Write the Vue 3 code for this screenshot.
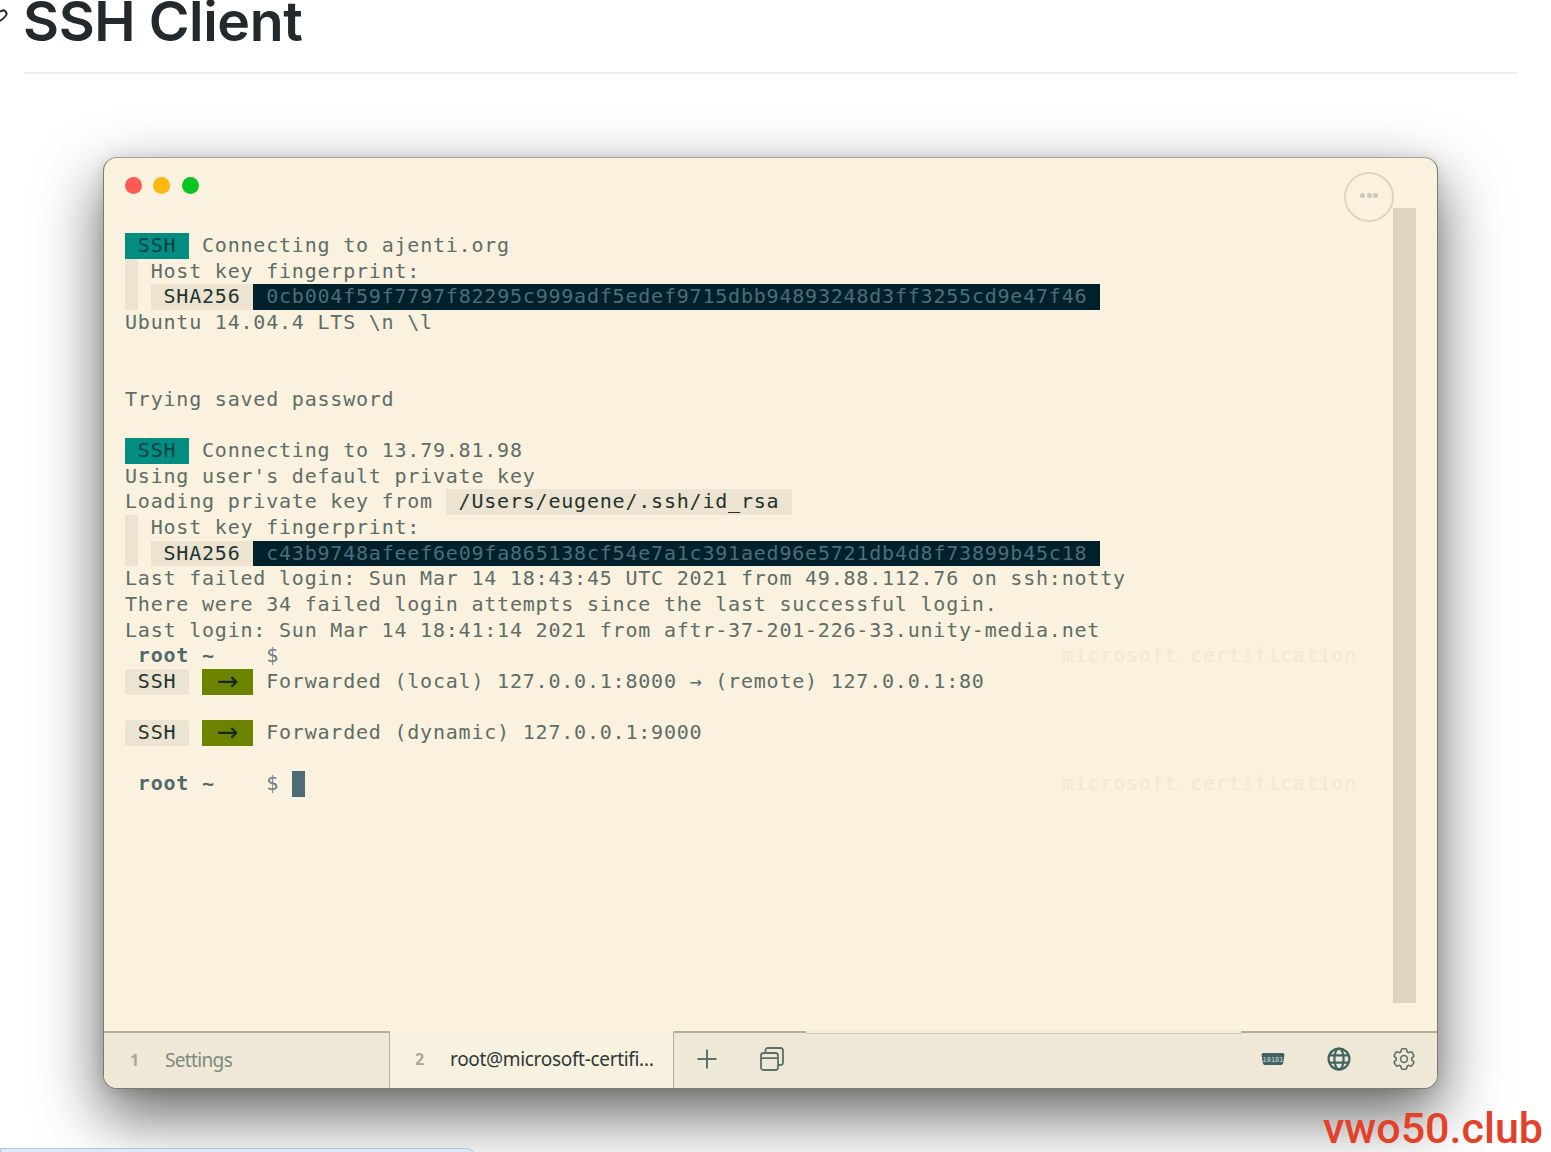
<script setup>
const wm = 'microsoft-certification'
const fp1 = '0cb004f59f7797f82295c999adf5edef9715dbb94893248d3ff3255cd9e47f46'
const fp2 = 'c43b9748afeef6e09fa865138cf54e7a1c391aed96e5721db4d8f73899b45c18'
const s = (t, c = '') => ({ t, c })
const hostKey = [s(' ', 'tint'), s(' '), s('Host key fingerprint:')]
const sha = (fp) => [s(' ', 'tint'), s(' '), s(' SHA256 ', 'tint strong'), s(` ${fp} `, 'hash')]
const prompt = [s(' '), s('root', 'root'), s(' '), s('~', 'root'), s('    '), s('$', 'dollar')]
const sshBadge = [s(' SSH ', 'teal'), s(' ')]
const fwd = (text) => [s(' SSH ', 'tint strong round'), s(' '), s('→', 'olive'), s(' '), s(text)]

const rows = [
  { segs: [...sshBadge, s('Connecting to ajenti.org')] },
  { segs: hostKey },
  { segs: sha(fp1) },
  { segs: [s('Ubuntu 14.04.4 LTS \\n \\l')] },
  { segs: [] },
  { segs: [] },
  { segs: [s('Trying saved password')] },
  { segs: [] },
  { segs: [...sshBadge, s('Connecting to 13.79.81.98')] },
  { segs: [s("Using user's default private key")] },
  { segs: [s('Loading private key from '), s(' /Users/eugene/.ssh/id_rsa ', 'tint strong')] },
  { segs: hostKey },
  { segs: sha(fp2) },
  { segs: [s('Last failed login: Sun Mar 14 18:43:45 UTC 2021 from 49.88.112.76 on ssh:notty')] },
  { segs: [s('There were 34 failed login attempts since the last successful login.')] },
  { segs: [s('Last login: Sun Mar 14 18:41:14 2021 from aftr-37-201-226-33.unity-media.net')] },
  { segs: prompt, mark: wm },
  { segs: fwd('Forwarded (local) 127.0.0.1:8000 → (remote) 127.0.0.1:80') },
  { segs: [] },
  { segs: fwd('Forwarded (dynamic) 127.0.0.1:9000') },
  { segs: [] },
  { segs: [...prompt, s(' '), s(' ', 'cursor')], mark: wm },
]
</script>

<template>
  <div class="page">
    <svg class="anchor" width="10" height="18" viewBox="0 0 10 18" aria-hidden="true">
      <path d="M0 2.5 L3.5 1.2 Q7 3 6.5 5.5 Q5.5 8 0 12" fill="none" stroke="#24292e" stroke-width="2" />
    </svg>
    <h1 class="title">SSH Client</h1>

    <section class="window">
      <header class="titlebar">
        <i class="light red"></i>
        <i class="light amber"></i>
        <i class="light green"></i>
      </header>

      <button class="more" type="button" aria-label="More"><i></i><i></i><i></i></button>

      <div class="body">
        <div class="terminal">
          <div v-for="(row, i) in rows" :key="i" class="row">
            <div class="cells">
              <span v-for="(seg, j) in row.segs" :key="j" :class="seg.c">{{ seg.t }}</span>
            </div>
            <span v-if="row.mark" class="mark">{{ row.mark }}</span>
          </div>
        </div>
        <div class="scrollbar"></div>
      </div>

      <footer class="tabbar">
        <div class="tab">
          <b class="num">1</b><span class="tab-name">Settings</span>
        </div>
        <div class="tab active">
          <b class="num">2</b><span class="tab-name">root@microsoft-certifi…</span>
        </div>
        <div class="tools">
          <svg class="ico plus" width="22" height="22" viewBox="0 0 22 22" aria-hidden="true">
            <path d="M11 1.5v19M1.5 11h19" />
          </svg>
          <svg class="ico cards" width="24" height="24" viewBox="0 0 24 24" aria-hidden="true">
            <rect x="1" y="6" width="17" height="17" rx="2.5" />
            <path d="M1 11.2h17M5.5 6V3.5A2.5 2.5 0 0 1 8 1h12.5A2.5 2.5 0 0 1 23 3.5v12a2.5 2.5 0 0 1-2.5 2.5H18" />
          </svg>
        </div>
        <div class="spacer"></div>
        <div class="status">
          <svg class="serial" width="24" height="14" viewBox="0 0 24 14" aria-hidden="true">
            <path d="M2.5 1h19A1.8 1.8 0 0 1 23.4 3l-1.2 8a2.4 2.4 0 0 1-2.4 2H4.2a2.4 2.4 0 0 1-2.4-2L.6 3A1.8 1.8 0 0 1 2.5 1Z" fill="#3e6266" />
            <text x="12" y="9.6" text-anchor="middle" class="serial-text">10101</text>
          </svg>
          <svg class="globe" width="24" height="24" viewBox="0 0 24 24" aria-hidden="true">
            <circle cx="12" cy="12" r="10.4" />
            <ellipse cx="12" cy="12" rx="4.6" ry="10.4" />
            <path d="M2 8.4h20M2 15.6h20" />
          </svg>
          <svg class="gear" width="24" height="24" viewBox="1.5 1.5 21 21" aria-hidden="true">
            <path d="M9.594 3.94c.09-.542.56-.94 1.11-.94h2.593c.55 0 1.02.398 1.11.94l.213 1.281c.063.374.313.686.645.87.074.04.147.083.22.127.325.196.72.257 1.075.124l1.217-.456a1.125 1.125 0 0 1 1.37.49l1.296 2.247a1.125 1.125 0 0 1-.26 1.431l-1.003.827c-.293.241-.438.613-.43.992a7.723 7.723 0 0 1 0 .255c-.008.378.137.75.43.991l1.004.827c.424.35.534.955.26 1.43l-1.298 2.247a1.125 1.125 0 0 1-1.369.491l-1.217-.456c-.355-.133-.75-.072-1.076.124a6.47 6.47 0 0 1-.22.128c-.331.183-.581.495-.644.869l-.213 1.281c-.09.543-.56.94-1.11.94h-2.594c-.55 0-1.019-.398-1.11-.94l-.213-1.281c-.062-.374-.312-.686-.644-.87a6.52 6.52 0 0 1-.22-.127c-.325-.196-.72-.257-1.076-.124l-1.217.456a1.125 1.125 0 0 1-1.369-.49l-1.297-2.247a1.125 1.125 0 0 1 .26-1.431l1.004-.827c.292-.24.437-.613.43-.991a6.932 6.932 0 0 1 0-.255c.007-.38-.138-.751-.43-.992l-1.004-.827a1.125 1.125 0 0 1-.26-1.43l1.297-2.247a1.125 1.125 0 0 1 1.37-.491l1.216.456c.356.133.751.072 1.076-.124.072-.044.146-.086.22-.128.332-.183.582-.495.644-.869l.214-1.28Z" />
            <circle cx="12" cy="12" r="3" />
          </svg>
        </div>
      </footer>
    </section>

    <div class="next-block"></div>
    <div class="brand">vwo50.club</div>
  </div>
</template>

<style scoped>
.page {
  position: relative;
  height: 1152px;
  overflow: hidden;
  padding: 0 34px 0 24px;
  box-sizing: border-box;
  background: #fff;
}
.anchor {
  position: absolute;
  left: 0;
  top: 9px;
}
.title {
  margin: -14px 0 0;
  height: 70px;
  padding-bottom: 16px;
  box-sizing: content-box;
  border-bottom: 2px solid #e9ebec;
  font: 600 55.4px/70px Inter, "Liberation Sans", sans-serif;
  letter-spacing: -0.4px;
  text-indent: -1px;
  color: #24292e;
}
.window {
  position: relative;
  display: flex;
  flex-direction: column;
  box-sizing: border-box;
  width: 1335px;
  height: 932px;
  margin: 83px 0 0 79px;
  border: 1px solid #7f7a70;
  border-top-color: #a9a197;
  border-radius: 14px;
  overflow: hidden;
  background: #faf1de;
  box-shadow: 0 26px 62px 2px rgba(0, 0, 0, 0.58), 0 2px 14px rgba(0, 0, 0, 0.12);
}
.titlebar {
  display: flex;
  flex: none;
  gap: 11.5px;
  box-sizing: border-box;
  height: 50px;
  padding: 19px 0 0 20.5px;
}
.light {
  width: 17px;
  height: 17px;
  border-radius: 50%;
}
.red { background: #ff5a54; }
.amber { background: #fdb70f; }
.green { background: #0bc41f; }
.more {
  position: absolute;
  top: 14px;
  right: 43px;
  z-index: 1;
  display: flex;
  align-items: center;
  justify-content: center;
  gap: 1.5px;
  width: 50px;
  height: 50px;
  padding: 0 0 3px;
  border: 2px solid #ddd5c1;
  border-radius: 50%;
  background: #faf1de;
}
.more i {
  width: 5px;
  height: 5px;
  border-radius: 50%;
  background: #cfc8b6;
}
.body {
  display: flex;
  flex: 1;
  min-height: 0;
  justify-content: space-between;
}
.terminal {
  box-sizing: border-box;
  width: 1253px;
  padding: 25px 0 0 21px;
  font: 400 20px/25.65px "DejaVu Sans Mono", "Liberation Mono", monospace;
  letter-spacing: 0.79px;
  color: #5e6d68;
}
.row {
  display: flex;
  justify-content: space-between;
  height: 25.65px;
  white-space: pre;
}
.cells {
  display: flex;
}
.cells span {
  display: block;
  height: 25.65px;
}
.tint { background: #ece4d0; }
.strong { color: #22332f; }
.round { border-radius: 3px; }
.teal {
  background: #028d80;
  color: #073f47;
}
.hash {
  background: #00212c;
  color: #4e6c77;
}
.root {
  font-weight: 700;
  color: #4f6a6c;
}
.dollar { color: #6a7f85; }
.cells .olive {
  box-sizing: border-box;
  width: 51.3px;
  background: #6c8300;
  color: #16281c;
  font: 400 26px/24px "DejaVu Sans", sans-serif;
  letter-spacing: 0;
  text-align: center;
}
.cursor { background: #4f6c75; }
.mark {
  color: #f1e8d5;
}
.scrollbar {
  flex: none;
  width: 23px;
  margin: 0 21px 28px 0;
  background: #ddd5c1;
}
.tabbar {
  display: flex;
  flex: none;
  height: 57px;
  background: #efe8d6;
  font: 400 19px/1 "Noto Sans", sans-serif;
}
.tab {
  display: flex;
  align-items: center;
  box-sizing: border-box;
  width: 286px;
  padding: 0 0 1px 26px;
  border-top: 2px solid #b1ae9e;
  border-right: 1px solid #b1ae9e;
  color: #7f897f;
}
.tab .tab-name {
  letter-spacing: -0.65px;
}
.tab.active {
  width: 284px;
  padding: 0 0 3px 25px;
  border-top-color: #f9f1df;
  background: #f9f1df;
  color: #2b3a37;
}
.tab.active .tab-name {
  letter-spacing: -0.32px;
}
.num {
  flex: none;
  width: 35px;
  font-size: 16px;
  font-weight: 700;
  color: #a8ab99;
}
.tab-name {
  white-space: nowrap;
}
.tools {
  display: flex;
  align-items: center;
  flex: none;
  box-sizing: border-box;
  width: 132px;
  gap: 42px;
  padding: 0 0 3px 22px;
  border-top: 2px solid #b1ae9e;
}
.ico {
  fill: none;
  stroke: #5b7069;
  stroke-width: 1.8;
}
.plus { stroke-width: 2; }
.spacer {
  flex: 1;
  border-top: 2px solid #f4ecd9;
  box-shadow: inset 0 1px 0 #cdcbb9;
}
.status {
  display: flex;
  align-items: center;
  flex: none;
  box-sizing: border-box;
  width: 196px;
  gap: 41.5px;
  padding: 0 0 3px 20px;
  border-top: 2px solid #b1ae9e;
}
.serial-text {
  font: 700 7px "DejaVu Sans Mono", monospace;
  fill: #a9bdb6;
}
.globe {
  fill: none;
  stroke: #3f6560;
  stroke-width: 2.2;
}
.gear {
  fill: none;
  stroke: #5f6f68;
  stroke-width: 1.4;
}
.next-block {
  position: absolute;
  left: 0;
  bottom: -6px;
  width: 475px;
  height: 10px;
  box-sizing: border-box;
  border: 1px solid #b3c6da;
  border-radius: 0 8px 0 0;
  background: #dbe8f5;
}
.brand {
  position: absolute;
  right: 8px;
  top: 1106px;
  font: 500 43px/44px Roboto, sans-serif;
  color: #e4412a;
}
</style>

<style>
body {
  background: #fff;
}
</style>
